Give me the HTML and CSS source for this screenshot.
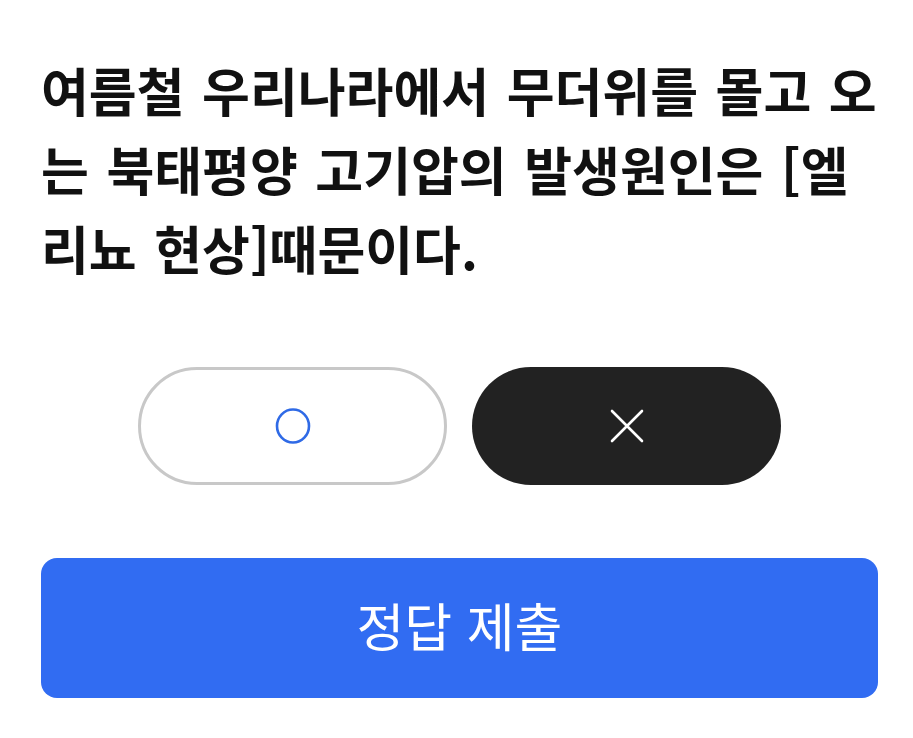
FILE: index.html
```html
<!DOCTYPE html>
<html lang="ko">
<head>
<meta charset="utf-8">
<link rel="stylesheet" href="styles.css">
</head>
<body>
<main class="quiz">
  <h1 class="question">여름철 우리나라에서 무더위를 몰고 오는 북태평양 고기압의 발생원인은 [엘리뇨 현상]때문이다.</h1>
  <div class="choices">
    <button class="choice choice-o" type="button" aria-label="O">
      <svg width="36" height="38" viewBox="0 0 36 38"><ellipse cx="18" cy="19" rx="16" ry="16.5" fill="none" stroke="#2f6ae6" stroke-width="2.6"/></svg>
    </button>
    <button class="choice choice-x" type="button" aria-label="X">
      <svg width="36" height="36" viewBox="0 0 36 36"><path d="M3 3 L33 33 M33 3 L3 33" stroke="#ffffff" stroke-width="2.6" stroke-linecap="round"/></svg>
    </button>
  </div>
  <button class="submit" type="button">정답 제출</button>
</main>
</body>
</html>
```
FILE: styles.css
```css
html, body {
  margin: 0;
  padding: 0;
  background: #ffffff;
}
body {
  font-family: "Noto Sans CJK KR", "Noto Sans", sans-serif;
  color: #111111;
}
.quiz {
  padding: 50px 35px 0 41px;
  display: flex;
  flex-direction: column;
}
.question {
  margin: 0;
  font-size: 52px;
  font-weight: 700;
  line-height: 79px;
  letter-spacing: 0;
  word-spacing: 3px;
  word-break: break-all;
  color: #111111;
}
.choices {
  margin-top: 80px;
  display: flex;
  justify-content: center;
  gap: 25px;
}
.choice {
  width: 309px;
  height: 118px;
  border-radius: 59px;
  display: flex;
  align-items: center;
  justify-content: center;
  padding: 0;
  cursor: pointer;
}
.choice-o {
  background: #ffffff;
  border: 3px solid #c8c8c8;
}
.choice-x {
  background: #222222;
  border: none;
}
.submit {
  margin-top: 73px;
  height: 140px;
  border: none;
  border-radius: 16px;
  background: #316cf2;
  color: #ffffff;
  font-family: "Noto Sans CJK KR", "Noto Sans", sans-serif;
  font-size: 52px;
  font-weight: 400;
  padding: 0 0 8px;
  cursor: pointer;
}
```
